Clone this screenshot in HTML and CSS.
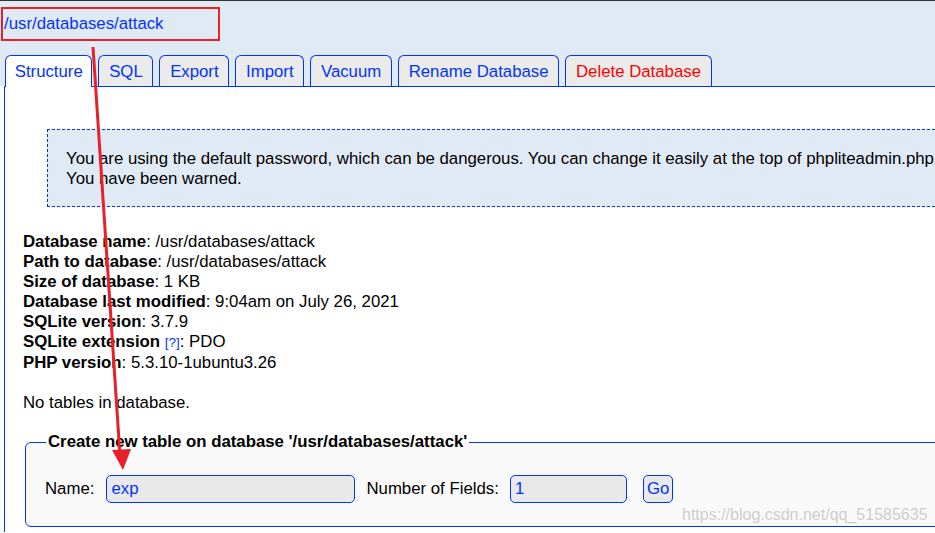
FILE: index.html
```html
<!DOCTYPE html>
<html lang="en">
<head>
    <meta charset="UTF-8">
    <meta name="viewport" content="width=device-width, initial-scale=1.0">
    <title>phpLiteAdmin - attack</title>
    <link rel="stylesheet" href="styles.css">
</head>
<body>
    <div class="page">
        <div class="top">
            <div class="db-title"><a href="#">/usr/databases/attack</a></div>
            <div class="tabs">
                <a href="#" class="tab active">Structure</a>
                <a href="#" class="tab">SQL</a>
                <a href="#" class="tab">Export</a>
                <a href="#" class="tab">Import</a>
                <a href="#" class="tab">Vacuum</a>
                <a href="#" class="tab">Rename Database</a>
                <a href="#" class="tab tab-danger">Delete Database</a>
            </div>
        </div>

        <div class="main">
            <div class="warning">
                You are using the default password, which can be dangerous. You can change it easily at the top of phpliteadmin.php<br>
                You have been warned.
            </div>

            <div class="db-info">
                <b>Database name</b>: /usr/databases/attack<br>
                <b>Path to database</b>: /usr/databases/attack<br>
                <b>Size of database</b>: 1 KB<br>
                <b>Database last modified</b>: 9:04am on July 26, 2021<br>
                <b>SQLite version</b>: 3.7.9<br>
                <b>SQLite extension</b> <a href="#" class="help">[?]</a>: PDO<br>
                <b>PHP version</b>: 5.3.10-1ubuntu3.26
            </div>

            <p class="no-tables">No tables in database.</p>

            <fieldset class="create-table">
                <legend>Create new table on database '/usr/databases/attack'</legend>
                <div class="create-row">
                    <label for="tablename">Name:</label>
                    <input type="text" id="tablename" class="input-name" value="exp">
                    <label for="tablefields" class="fields-label">Number of Fields:</label>
                    <input type="text" id="tablefields" class="input-fields" value="1">
                    <button type="button" class="btn">Go</button>
                </div>
            </fieldset>
        </div>

        <!-- screenshot annotations -->
        <div class="mark-box"></div>
        <svg class="mark-arrow" width="140" height="480" viewBox="0 0 140 480">
            <line x1="93" y1="47" x2="120" y2="456" stroke="#e8202a" stroke-width="3"/>
            <polygon points="112,450 131,449 123,470" fill="#e8202a"/>
        </svg>
        <div class="watermark">https://blog.csdn.net/qq_51585635</div>
    </div>
</body>
</html>
```

FILE: styles.css
```css
:root {
    --blue: #0033ff;
    --sky: #e0eaf5;
    --tab-bg: #ebebeb;
    --field-bg: #e9e9e9;
}

* {
    box-sizing: border-box;
}

body {
    margin: 0;
    width: 935px;
    height: 533px;
    overflow: hidden;
    font-family: "Liberation Sans", Arial, sans-serif;
    font-size: 16.8px;
    line-height: 20px;
    color: #000;
    background: #fff;
}

a {
    color: var(--blue);
    text-decoration: none;
}

.page {
    position: relative;
    width: 1200px;
    min-height: 533px;
}

.top {
    background: var(--sky);
    border-top: 1px solid #333;
    padding-top: 13px;
}

.db-title {
    padding-left: 4px;
    margin-bottom: 21px;
}

.tabs {
    display: flex;
    gap: 6px;
    padding-left: 5px;
    position: relative;
    z-index: 1;
}

.tab {
    display: block;
    height: 31px;
    line-height: 31px;
    padding: 0 9.7px;
    background: var(--tab-bg);
    border: 1px solid var(--blue);
    border-bottom: none;
    border-radius: 6px 6px 0 0;
}

.tab.active {
    background: #fff;
    height: 32px;
    margin-bottom: -1px;
    padding: 0 8.7px;
}

.tab-danger {
    color: #ff0000;
}

.main {
    margin-left: 4px;
    border-top: 1px solid var(--blue);
    border-left: 1px solid var(--blue);
    padding: 42px 0 0 18px;
    min-height: 446px;
}

.warning {
    margin-left: 24px;
    padding: 19px 18px 17px;
    background: var(--sky);
    border: 1px dashed var(--blue);
    white-space: nowrap;
}

.db-info {
    margin-top: 25px;
    white-space: nowrap;
}

.help {
    font-size: 13.5px;
}

.no-tables {
    margin: 20px 0 0;
}

.create-table {
    margin: 19px 0 0 2px;
    padding: 23px 19px 23px;
    border: 1px solid var(--blue);
    border-radius: 6px;
    background: #f9f9f9;
}

.create-table legend {
    font-weight: bold;
    padding: 0 2px;
    margin-left: 1px;
}

.create-row {
    display: flex;
    align-items: center;
}

.create-row input {
    height: 28px;
    padding: 0 4px;
    font-family: inherit;
    font-size: 16.8px;
    color: var(--blue);
    background: var(--field-bg);
    border: 1px solid var(--blue);
    border-radius: 5px;
}

.input-name {
    width: 249px;
    margin-left: 12px;
}

.fields-label {
    margin-left: 11px;
}

.input-fields {
    width: 117px;
    margin-left: 11px;
}

.btn {
    height: 28px;
    margin-left: 16px;
    padding: 0 3px;
    font-family: inherit;
    font-size: 16.8px;
    color: var(--blue);
    background: var(--field-bg);
    border: 1px solid var(--blue);
    border-radius: 5px;
}

.mark-box {
    position: absolute;
    left: 1px;
    top: 7px;
    width: 219px;
    height: 34px;
    border: 2px solid #e8202a;
}

.mark-arrow {
    position: absolute;
    left: 0;
    top: 0;
}

.watermark {
    position: absolute;
    left: 682px;
    top: 505px;
    color: rgba(190, 190, 190, 0.75);
    font-size: 16px;
}
```
